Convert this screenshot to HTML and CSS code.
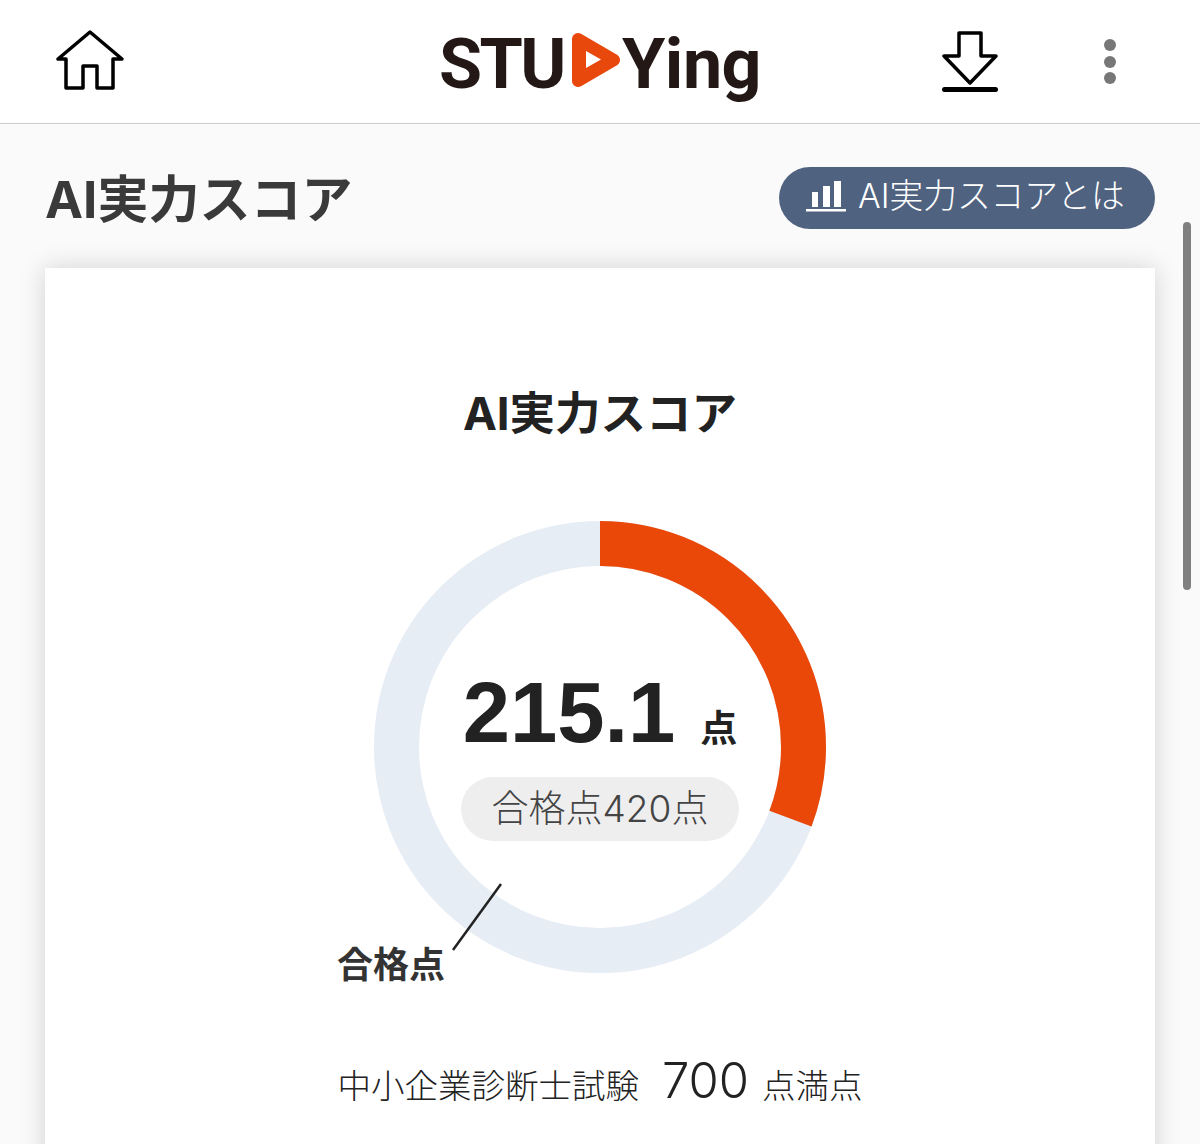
FILE: index.html
```html
<!DOCTYPE html>
<html lang="ja">
<head>
    <meta charset="UTF-8">
    <meta name="viewport" content="width=device-width, initial-scale=1.0">
    <title>AI実力スコア</title>
    <link rel="stylesheet" href="styles.css">
</head>
<body>
    <header class="topbar">
        <div class="topbar-left">
            <svg class="icon-home" width="68" height="60" viewBox="0 0 68 60">
                <path d="M34 2 L2 29 H10 V58 H27 V36 H41 V58 H57 V29 H66 Z" fill="none" stroke="#000" stroke-width="3.5" stroke-linejoin="round"/>
            </svg>
        </div>
        <div class="logo">
            <span class="logo-stu">STU</span>
            <svg class="logo-play" width="50" height="56" viewBox="0 0 50 56">
                <path d="M7 7 L43 28 L7 49 Z" fill="#e8480c" stroke="#e8480c" stroke-width="12" stroke-linejoin="round"/>
                <path d="M15 19 L30 27.5 L15 36 Z" fill="#fff"/>
            </svg>
            <span class="logo-ying">Ying</span>
        </div>
        <div class="topbar-right">
            <svg class="icon-download" width="56" height="62" viewBox="0 0 56 62">
                <path d="M17 2 H39 V25 H54 L28 52 L2 25 H17 Z" fill="none" stroke="#000" stroke-width="3.5" stroke-linejoin="round"/>
                <rect x="0" y="56" width="56" height="5" rx="2.5" fill="#000"/>
            </svg>
            <div class="kebab">
                <span></span>
                <span></span>
                <span></span>
            </div>
        </div>
    </header>

    <main class="content">
        <div class="section-head">
            <h2>AI実力スコア</h2>
            <a class="about-btn">
                <svg width="40" height="32" viewBox="0 0 40 32">
                    <rect x="6" y="12" width="6" height="15" fill="#fff"/>
                    <rect x="17" y="6" width="7" height="21" fill="#fff"/>
                    <rect x="28" y="1" width="7" height="26" fill="#fff"/>
                    <rect x="0" y="29" width="40" height="2.5" fill="#fff"/>
                </svg>
                <span>AI実力スコアとは</span>
            </a>
        </div>

        <section class="card">
            <h3>AI実力スコア</h3>
            <div class="chart">
                <svg width="452" height="452" viewBox="0 0 452 452">
                    <circle cx="226" cy="226" r="203.5" fill="none" stroke="#e6edf5" stroke-width="45"/>
                    <circle class="chart-value" cx="226" cy="226" r="203.5" fill="none" stroke="#e94809" stroke-width="45" pathLength="700" stroke-dasharray="215.1 700"/>
                    <line x1="127" y1="363" x2="79" y2="429" stroke="#222" stroke-width="2.5"/>
                </svg>
                <div class="chart-center">
                    <div class="score">
                        <span class="score-num">215.1</span>
                        <span class="score-unit">点</span>
                    </div>
                    <div class="pass-pill">合格点420点</div>
                </div>
                <div class="pass-label">合格点</div>
            </div>
            <div class="max-score">
                <span>中小企業診断士試験</span>
                <span class="max-num">700</span>
                <span>点満点</span>
            </div>
        </section>
    </main>

    <div class="scrollbar"></div>
</body>
</html>
```

FILE: styles.css
```css
html, body {
    height: 1144px;
    overflow: hidden;
}
body {
    position: relative;
    margin: 0;
    background-color: #fafafa;
    font-family: Inter, "Noto Sans CJK JP", sans-serif;
    color: #222;
}
.topbar {
    display: grid;
    grid-template-columns: 1fr auto 1fr;
    align-items: center;
    height: 123px;
    background: #fff;
    border-bottom: 1px solid #cccccc;
}
.topbar-left {
    display: flex;
    padding-left: 56px;
}
.icon-home {
    margin-bottom: 3px;
}
.topbar-right {
    display: flex;
    justify-content: flex-end;
    align-items: center;
    gap: 106px;
    padding-right: 84px;
}
.logo {
    display: flex;
    align-items: center;
    font-family: Roboto, "Liberation Sans", sans-serif;
    font-weight: 700;
    font-size: 70px;
    line-height: 80px;
    color: #231815;
}
.logo-stu {
    margin-top: 4px;
    letter-spacing: -2.5px;
}
.logo-ying {
    margin-top: 4px;
    letter-spacing: -0.5px;
}
.logo-play {
    margin: -4px 1px 0 7px;
}
.kebab {
    display: flex;
    flex-direction: column;
    gap: 4.5px;
}
.kebab span {
    width: 12px;
    height: 12px;
    border-radius: 50%;
    background: #777;
}
.content {
    padding: 43px 45px 0;
}
.section-head {
    display: flex;
    justify-content: space-between;
    align-items: center;
    height: 62px;
}
.section-head h2 {
    margin: 3px 0 0;
    font-size: 51px;
    font-weight: 700;
    line-height: 62px;
    color: #3a3a3a;
}
.about-btn {
    display: flex;
    align-items: center;
    gap: 12px;
    box-sizing: border-box;
    width: 376px;
    height: 62px;
    padding-left: 27px;
    border-radius: 31px;
    background-color: #4f6280;
    color: #fff;
    font-size: 33.7px;
    font-weight: 300;
}
.about-btn svg {
    margin-bottom: 4px;
}
.about-btn span {
    margin-bottom: 9px;
}
.card {
    height: 900px;
    margin-top: 39px;
    padding-top: 116px;
    box-sizing: border-box;
    background: #fff;
    box-shadow: 0 0 24px rgba(0, 0, 0, 0.16);
}
.card h3 {
    margin: 0;
    text-align: center;
    font-size: 45.5px;
    font-weight: 700;
    line-height: 60px;
    color: #222;
}
.chart {
    position: relative;
    width: 452px;
    height: 452px;
    margin: 77px auto 0;
}
.chart svg {
    display: block;
}
.chart-value {
    transform: rotate(-90deg);
    transform-origin: 226px 226px;
}
.chart-center {
    position: absolute;
    top: 147px;
    left: 0;
    right: 0;
    display: flex;
    flex-direction: column;
    align-items: center;
}
.score {
    display: flex;
    align-items: baseline;
    gap: 25px;
    line-height: 90px;
}
.score-num {
    font-family: "Liberation Sans", sans-serif;
    font-size: 85px;
    font-weight: 700;
}
.score-unit {
    font-size: 37px;
    font-weight: 700;
}
.pass-pill {
    width: 278px;
    height: 64px;
    margin-top: 3px;
    border-radius: 32px;
    background: #eee;
    color: #444;
    text-align: center;
    font-size: 37px;
    font-weight: 300;
    line-height: 64px;
}
.pass-label {
    position: absolute;
    left: -37px;
    top: 421px;
    font-size: 36px;
    font-weight: 700;
    line-height: 46px;
    color: #333;
}
.max-score {
    display: flex;
    justify-content: center;
    align-items: baseline;
    gap: 13px;
    margin-top: 78px;
    font-size: 33.5px;
    font-weight: 300;
    line-height: 60px;
    color: #222;
}
.max-num {
    margin-left: 10px;
    font-size: 49px;
    font-weight: 300;
}
.scrollbar {
    position: absolute;
    top: 222px;
    left: 1183px;
    width: 8px;
    height: 368px;
    border-radius: 4px;
    background: #808080;
}
```
